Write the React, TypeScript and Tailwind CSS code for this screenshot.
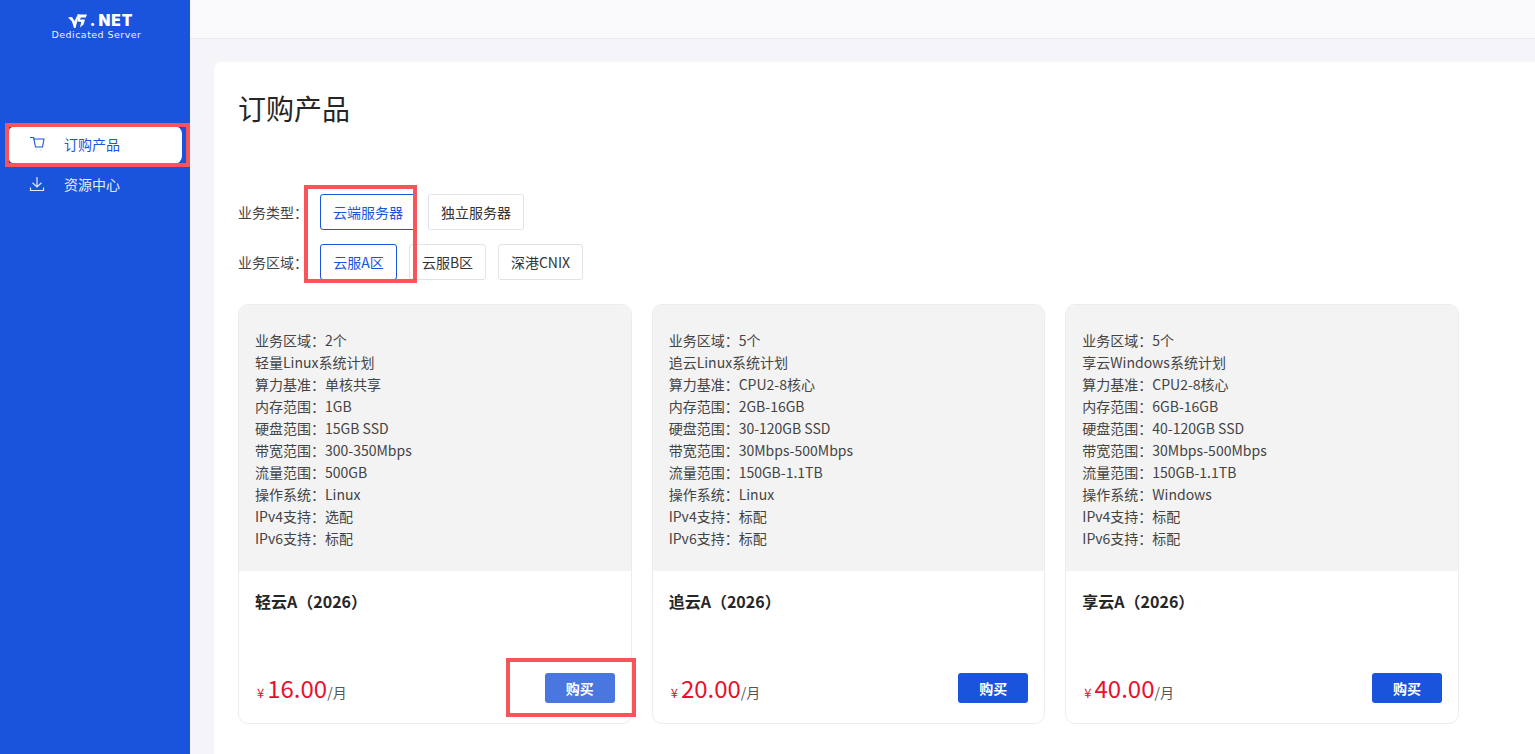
const cards = [
  {
    name: "轻云A（2026）",
    price: "16.00",
    specs: ["业务区域：2个", "轻量Linux系统计划", "算力基准：单核共享", "内存范围：1GB", "硬盘范围：15GB SSD", "带宽范围：300-350Mbps", "流量范围：500GB", "操作系统：Linux", "IPv4支持：选配", "IPv6支持：标配"],
    hover: true,
  },
  {
    name: "追云A（2026）",
    price: "20.00",
    specs: ["业务区域：5个", "追云Linux系统计划", "算力基准：CPU2-8核心", "内存范围：2GB-16GB", "硬盘范围：30-120GB SSD", "带宽范围：30Mbps-500Mbps", "流量范围：150GB-1.1TB", "操作系统：Linux", "IPv4支持：标配", "IPv6支持：标配"],
  },
  {
    name: "享云A（2026）",
    price: "40.00",
    specs: ["业务区域：5个", "享云Windows系统计划", "算力基准：CPU2-8核心", "内存范围：6GB-16GB", "硬盘范围：40-120GB SSD", "带宽范围：30Mbps-500Mbps", "流量范围：150GB-1.1TB", "操作系统：Windows", "IPv4支持：标配", "IPv6支持：标配"],
  },
];

function CartIcon() {
  return (
    <svg width="16" height="16" viewBox="0 0 16 16" fill="none" stroke="#1a53dc" strokeWidth="1.1" className="shrink-0">
      <path d="M1 1.500h3.500l1 1.500h9.500l-1.500 8h-7L4.500 1.500" />
      <path d="M6.500 14h1.500M11 14h1.500" strokeOpacity="0.3" />
    </svg>
  );
}

function DownloadIcon() {
  return (
    <svg width="16" height="16" viewBox="0 0 16 16" fill="none" stroke="#e4ebfc" strokeWidth="1.2" className="shrink-0">
      <path d="M8 1v10M3.500 6.800L8 11l4.500-4.200M1.500 11.500v3h13v-3" />
    </svg>
  );
}

function Logo() {
  return (
    <div className="flex h-[52px] flex-col items-center pt-[13px] pl-[11px] text-white">
      <div className="flex h-[15px] items-center">
        <svg width="19" height="14" viewBox="0 0 19 14" fill="white">
          <path d="M0 3.500L4 3l2.500 4L10 0h1.200L7.500 14H6L4 7.500z" />
          <path d="M10.500 .5H19l-1.200 3h-5L12 5.500h5L15.500 10.500 12 13.500l1.200-5.500L9.500 7.500z" />
        </svg>
        <span className="ml-[3px] text-[15px] leading-[15px] font-black font-['Inter',sans-serif]">.</span>
        <span className="ml-[3px] text-[15.500px] leading-[15px] font-black tracking-[0.9px] font-['Inter',sans-serif]">NET</span>
      </div>
      <div className="mt-[1px] -ml-[8px] text-[9.500px] leading-[11px] tracking-[0.45px] text-[#eef2fd] font-['DejaVu_Sans',sans-serif]">Dedicated Server</div>
    </div>
  );
}

function Sidebar() {
  return (
    <aside className="relative w-[190px] shrink-0 bg-[#1a53dc]">
      <Logo />
      <nav className="mt-[74px] px-[8px] text-[14px]">
        <div className="flex h-[38px] items-center rounded-[8px] bg-white pb-[2px] pl-[21px] text-[#1a53dc]">
          <CartIcon />
          <span className="ml-[19px]">订购产品</span>
        </div>
        <div className="mt-[2px] flex h-[38px] items-center pb-[2px] pl-[21px] text-[#e4ebfc]">
          <DownloadIcon />
          <span className="ml-[19px]">资源中心</span>
        </div>
      </nav>
      {/* annotation */}
      <div className="absolute top-[123px] left-[5px] h-[44px] w-[185px] border-[4px] border-[#f9545a]" />
    </aside>
  );
}

function Option({ label, active, width }: { label: string; active?: boolean; width: string }) {
  return (
    <div
      className={`flex h-[36px] items-center justify-center rounded-[3px] border bg-white text-[14px] ${width} ${
        active ? "border-[#1a53dc] text-[#1a53dc]" : "border-[#e3e3e6] text-[#333]"
      }`}
    >
      {label}
    </div>
  );
}

function Card({ card }: { card: (typeof cards)[number] }) {
  return (
    <div className="flex h-[420px] w-[393.67px] shrink-0 flex-col overflow-hidden rounded-[10px] border border-[#ececef] bg-white">
      <div className="h-[266px] bg-[#f3f3f3] px-[16px] pt-[24px] text-[14px] leading-[22px] text-[#444]">
        {card.specs.map((line) => (
          <div key={line}>{line}</div>
        ))}
      </div>
      <div className="flex flex-1 flex-col px-[16px] pt-[19px] pb-[20px]">
        <div className="text-[16px] leading-[22px] font-bold text-[#262626]">{card.name}</div>
        <div className="mt-auto flex items-end justify-between">
          <div className="ml-[2px] flex items-baseline text-[#e8112d]">
            <span className="mr-[3px] text-[13px]">¥</span>
            <span className="text-[24px] leading-[30px]">{card.price}</span>
            <span className="text-[14px] text-[#555]">/月</span>
          </div>
          <button
            type="button"
            className={`h-[30px] w-[70px] rounded-[3px] text-[14px] font-bold text-white ${
              card.hover ? "bg-[#4a76e0]" : "bg-[#1a53dc]"
            }`}
          >
            购买
          </button>
        </div>
      </div>
    </div>
  );
}

export default function App() {
  return (
    <div className="relative flex h-[754px] w-[1535px] overflow-hidden bg-[#f5f5f9] font-['Noto_Sans_CJK_SC','Noto_Sans',sans-serif]">
      <Sidebar />
      <div className="flex min-w-0 flex-1 flex-col">
        <header className="h-[39px] shrink-0 border-b border-[#ececf0] bg-[#f9f9fb]" />
        <main className="mt-[23px] ml-[24px] flex-1 rounded-tl-[8px] bg-white pl-[24px]">
          <h1 className="pt-[27px] text-[28px] leading-[38px] text-[#262626]">订购产品</h1>
          <div className="mt-[67px] flex items-center gap-[12px]">
            <span className="w-[70px] text-[14px] text-[#444]">业务类型：</span>
            <Option label="云端服务器" active width="w-[96px]" />
            <Option label="独立服务器" width="w-[96px]" />
          </div>
          <div className="mt-[14px] flex items-center gap-[12px]">
            <span className="w-[70px] text-[14px] text-[#444]">业务区域：</span>
            <Option label="云服A区" active width="w-[77px]" />
            <Option label="云服B区" width="w-[77px]" />
            <Option label="深港CNIX" width="w-[85px]" />
          </div>
          <div className="mt-[24px] flex gap-[20px]">
            {cards.map((card) => (
              <Card key={card.name} card={card} />
            ))}
          </div>
        </main>
      </div>
      {/* annotations */}
      <div className="absolute top-[185px] left-[304px] h-[98px] w-[113px] border-[4px] border-[#f9545a]" />
      <div className="absolute top-[658px] left-[506px] h-[59px] w-[130px] border-[4px] border-[#f9545a]" />
    </div>
  );
}
